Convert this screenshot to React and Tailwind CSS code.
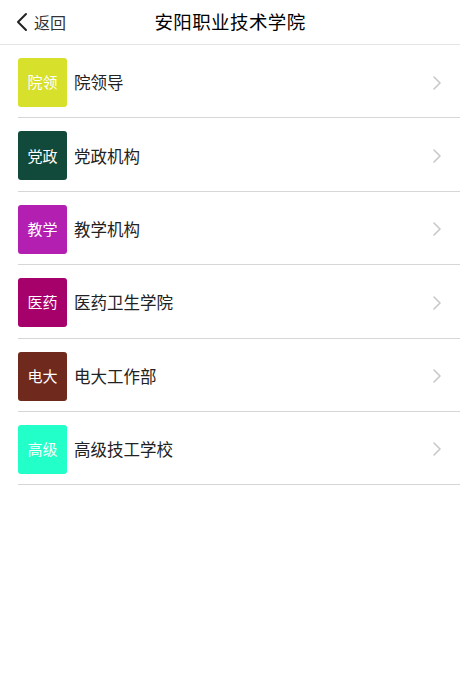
import React from "react";

const items = [
  { short: "院领", name: "院领导", color: "bg-[#d7e02a]" },
  { short: "党政", name: "党政机构", color: "bg-[#114a3b]" },
  { short: "教学", name: "教学机构", color: "bg-[#b21fb1]" },
  { short: "医药", name: "医药卫生学院", color: "bg-[#a6006a]" },
  { short: "电大", name: "电大工作部", color: "bg-[#6f2a1d]" },
  { short: "高级", name: "高级技工学校", color: "bg-[#22ffc9]" },
];

const App = () => {
  return (
    <div
      className="min-h-screen bg-white"
      style={{ fontFamily: '"Noto Sans CJK SC", "Noto Sans", sans-serif' }}
    >
      {/* Header */}
      <header className="relative h-[45px] flex items-center justify-center border-b border-[#e4e4e4]">
        <div className="absolute left-[15px] top-0 h-full flex items-center text-[#333] cursor-pointer">
          <svg width="14" height="20" viewBox="0 0 14 20" fill="none">
            <path d="M11 2 L3 10 L11 18" stroke="#222" strokeWidth="2" strokeLinecap="round" strokeLinejoin="round" />
          </svg>
          <span className="ml-[5px] text-[16px] text-[#333]">返回</span>
        </div>
        <h1 className="text-[18.5px] font-normal text-black tracking-[0.4px]">安阳职业技术学院</h1>
      </header>

      {/* List */}
      <ul className="pl-[18px]">
        {items.map((item) => (
          <li key={item.name} className="border-b border-[#d6d6d6]">
            <div className="flex items-center pt-[13px] pb-[10.4px] pr-[18px]">
              <div
                className={`w-[49px] h-[49px] rounded-[3px] ${item.color} flex items-center justify-center text-white text-[15px]`}
              >
                {item.short}
              </div>
              <span className="ml-[7px] flex-1 text-[16.5px] text-[#222]">{item.name}</span>
              <svg width="10" height="16" viewBox="0 0 10 16" fill="none">
                <path d="M2 2 L8 8 L2 14" stroke="#c8c8cc" strokeWidth="1.6" strokeLinecap="round" strokeLinejoin="round" />
              </svg>
            </div>
          </li>
        ))}
      </ul>
    </div>
  );
};

export default App;
